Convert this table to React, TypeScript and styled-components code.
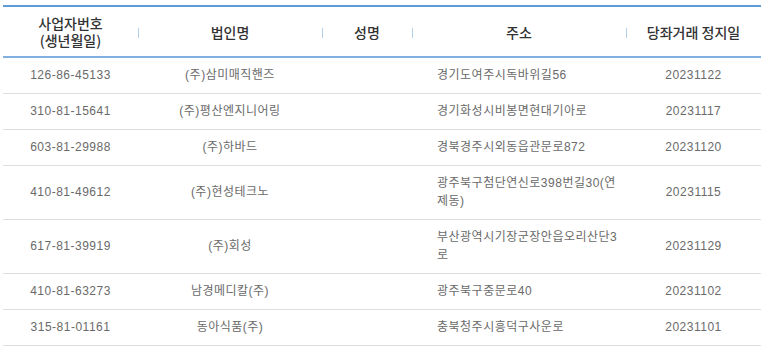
import React from 'react'
import styled, { createGlobalStyle } from 'styled-components'

type Row = {
  bizNo: string
  corp: string
  name: string
  address: string
  date: string
}

const rows: Row[] = [
  { bizNo: '126-86-45133', corp: '(주)삼미매직핸즈', name: '', address: '경기도여주시독바위길56', date: '20231122' },
  { bizNo: '310-81-15641', corp: '(주)평산엔지니어링', name: '', address: '경기화성시비봉면현대기아로', date: '20231117' },
  { bizNo: '603-81-29988', corp: '(주)하바드', name: '', address: '경북경주시외동읍관문로872', date: '20231120' },
  { bizNo: '410-81-49612', corp: '(주)현성테크노', name: '', address: '광주북구첨단연신로398번길30(연제동)', date: '20231115' },
  { bizNo: '617-81-39919', corp: '(주)회성', name: '', address: '부산광역시기장군장안읍오리산단3로', date: '20231129' },
  { bizNo: '410-81-63273', corp: '남경메디칼(주)', name: '', address: '광주북구중문로40', date: '20231102' },
  { bizNo: '315-81-01161', corp: '동아식품(주)', name: '', address: '충북청주시흥덕구사운로', date: '20231101' },
]

const App = (): JSX.Element => {
  return (
    <Page>
      <GlobalStyle />
      <Table>
        <colgroup>
          <col style={{ width: 135 }} />
          <col style={{ width: 184 }} />
          <col style={{ width: 90 }} />
          <col style={{ width: 214 }} />
          <col style={{ width: 135 }} />
        </colgroup>
        <thead>
          <tr>
            <HeadCell>
              <HeadLine>사업자번호</HeadLine>
              <HeadLine>(생년월일)</HeadLine>
            </HeadCell>
            <HeadCell divider>법인명</HeadCell>
            <HeadCell divider>성명</HeadCell>
            <HeadCell divider>주소</HeadCell>
            <HeadCell divider>당좌거래 정지일</HeadCell>
          </tr>
        </thead>
        <tbody>
          {rows.map((r) => (
            <tr key={r.bizNo + r.corp}>
              <Cell>{r.bizNo}</Cell>
              <Cell>{r.corp}</Cell>
              <Cell>{r.name}</Cell>
              <Cell left>{r.address}</Cell>
              <Cell>{r.date}</Cell>
            </tr>
          ))}
        </tbody>
      </Table>
    </Page>
  )
}

export default App

// Styling
const GlobalStyle = createGlobalStyle`
  html, body {
    margin: 0;
    padding: 0;
    background: #fff;
  }
`

const Page = styled.div`
  padding: 5px 1px 0 3px;
  width: 762px;
  box-sizing: border-box;
`

const Table = styled.table`
  width: 758px;
  table-layout: fixed;
  border-collapse: collapse;
  border-top: 2px solid #5d9cd8;
`

const HeadCell = styled.th<{ divider?: boolean }>`
  position: relative;
  height: 49px;
  padding: 0;
  border-bottom: 2px solid #7fb0e0;
  font-family: 'Noto Sans CJK KR', 'Noto Sans', sans-serif;
  font-size: 14px;
  font-weight: 500;
  line-height: 18px;
  color: #333;
  text-align: center;
  vertical-align: middle;

  &::before {
    content: '';
    display: ${({ divider }) => (divider ? 'block' : 'none')};
    position: absolute;
    left: 0;
    top: 50%;
    margin-top: -4px;
    width: 1px;
    height: 10px;
    background: #b3d0ec;
  }
`

const HeadLine = styled.span`
  display: block;
  line-height: 17px;
`

const Cell = styled.td<{ left?: boolean }>`
  padding: ${({ left }) => (left ? '8px 3px 9px 25px' : '8px 0 9px')};
  border-bottom: 1px solid #dedede;
  font-family: 'Liberation Sans', 'Noto Sans CJK KR', sans-serif;
  font-size: 12px;
  letter-spacing: 0.5px;
  line-height: 18px;
  color: #6a6a6a;
  text-align: ${({ left }) => (left ? 'left' : 'center')};
  vertical-align: middle;
`
